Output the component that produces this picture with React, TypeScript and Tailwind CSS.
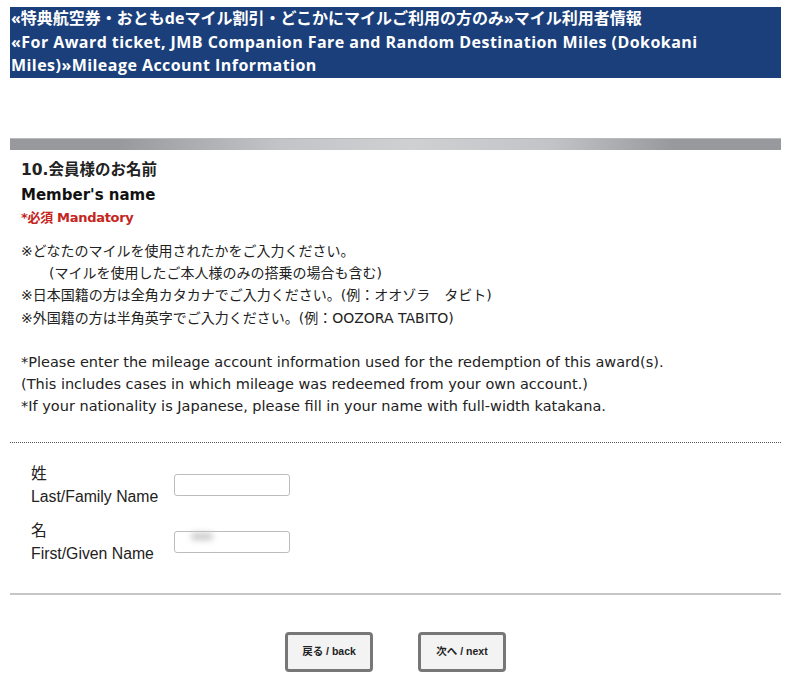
import React from "react";

const jp = "font-['DejaVu_Sans','Noto_Sans_CJK_JP',sans-serif]";

export default function App() {
  return (
    <div className={`w-[771px] ml-[10px] pt-[7px] text-[#222] ${jp}`}>
      <div className="bg-[#1b3f7b] text-white font-bold text-[16px] leading-[23.5px] pl-[1px] font-['Open_Sans','Noto_Sans_CJK_JP',sans-serif]">
        <div>«特典航空券・おともdeマイル割引・どこかにマイルご利用の方のみ»マイル利用者情報</div>
        <div className="tracking-[0.45px]">
          «For Award ticket, JMB Companion Fare and Random Destination Miles (Dokokani
          <br />
          Miles)»Mileage Account Information
        </div>
      </div>

      <div className="mt-[60px] h-[12px] border-t border-[#b9babd] bg-[linear-gradient(90deg,#98999d_0%,#98999d_14%,#c3c4c7_35%,#cfd0d2_52%,#c3c4c7_70%,#98999d_86%,#98999d_100%)]" />

      <div className="pl-[11px]">
        <div className="mt-[8px] font-bold text-[15.5px] leading-[25px]">10.会員様のお名前</div>
        <div className="font-bold text-[15px] leading-[25px] text-[#111]">Member's name</div>
        <div className="font-bold text-[13px] leading-[20px] text-[#c4251c] tracking-[-0.3px]">*必須 Mandatory</div>

        <div className="mt-[12.5px] text-[14px] leading-[22.2px] text-[#222]">
          <div>※どなたのマイルを使用されたかをご入力ください。</div>
          <div>　　(マイルを使用したご本人様のみの搭乗の場合も含む)</div>
          <div>※日本国籍の方は全角カタカナでご入力ください。(例：オオゾラ　タビト)</div>
          <div>※外国籍の方は半角英字でご入力ください。(例：OOZORA TABITO)</div>
        </div>
        <div className="mt-[22.2px] text-[14.5px] leading-[22.2px] font-['DejaVu_Sans',sans-serif] text-[#222]">
          <div>*Please enter the mileage account information used for the redemption of this award(s).</div>
          <div>(This includes cases in which mileage was redeemed from your own account.)</div>
          <div>*If your nationality is Japanese, please fill in your name with full-width katakana.</div>
        </div>
      </div>

      <div className="mt-[24px] border-t border-dotted border-[#555]" />

      <div className="mt-[19px] pl-[21px] flex flex-col gap-[11.5px] font-['Liberation_Sans','Noto_Sans_CJK_JP',sans-serif] text-[15.8px] leading-[23px] text-[#222]">
        <div className="flex items-center">
          <div className="w-[143px]">
            <div>姓</div>
            <div>Last/Family Name</div>
          </div>
          <div className="w-[116px] h-[22px] border border-[#bcbcbc] rounded-[3px] bg-white" />
        </div>
        <div className="flex items-center">
          <div className="w-[143px]">
            <div>名</div>
            <div>First/Given Name</div>
          </div>
          <div className="relative w-[116px] h-[22px] border border-[#bcbcbc] rounded-[3px] bg-white">
            <div className="absolute left-[16px] top-[1px] w-[22px] h-[7px] rounded-full bg-[#c8c8c8] blur-[3px]" />
          </div>
        </div>
      </div>

      <div className="mt-[28px] border-t-2 border-[#c6c6c6]" />

      <div className="mt-[37px] flex justify-center gap-[45px] font-['Liberation_Sans','Noto_Sans_CJK_JP',sans-serif]">
        <button className="w-[88px] h-[40px] border-[3px] border-[#777] rounded-[4px] bg-[#f3f3f3] text-[10.5px] font-bold text-[#222]">
          戻る / back
        </button>
        <button className="w-[88px] h-[40px] border-[3px] border-[#777] rounded-[4px] bg-[#f3f3f3] text-[10.5px] font-bold text-[#222]">
          次へ / next
        </button>
      </div>
    </div>
  );
}
